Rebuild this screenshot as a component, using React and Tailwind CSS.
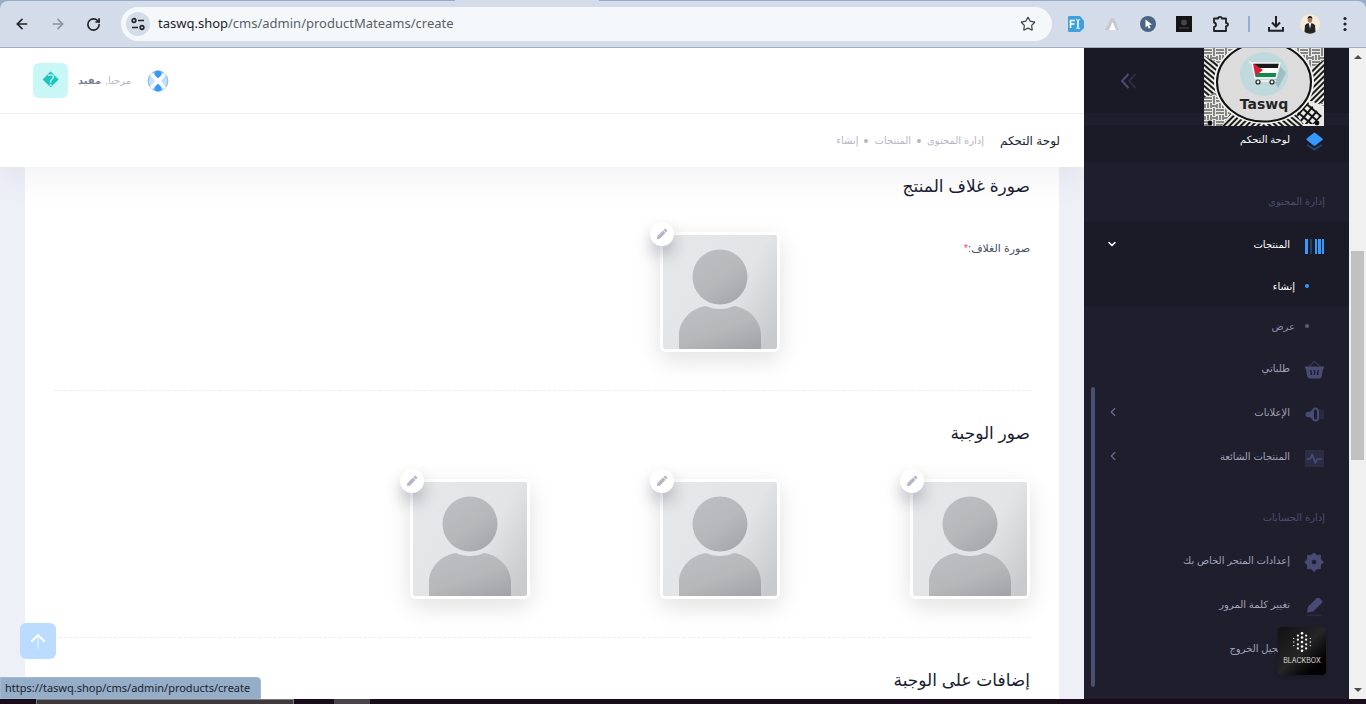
import { ArrowLeft, ArrowRight, RotateCw, Star, ChevronDown, ChevronLeft } from "lucide-react";

const crumbs = ["إدارة المحتوى", "المنتجات", "إنشاء"];

const AvatarArt = () => (
    <svg viewBox="0 0 114 114" className="block size-full rounded-xs" aria-hidden="true">
        <defs>
            <linearGradient id="photoBg" x1="0" y1="0.2" x2="1" y2="0.8">
                <stop offset="0" stopColor="#e5e7e8" />
                <stop offset="0.6" stopColor="#e2e4e5" />
                <stop offset="1" stopColor="#c8cacb" />
            </linearGradient>
            <linearGradient id="photoFg" x1="0.2" y1="0" x2="0.9" y2="1">
                <stop offset="0" stopColor="#bbbdc0" />
                <stop offset="0.5" stopColor="#b6b8ba" />
                <stop offset="1" stopColor="#a2a4a7" />
            </linearGradient>
        </defs>
        <rect width="114" height="114" fill="url(#photoBg)" />
        <circle cx="57" cy="42" r="27.5" fill="url(#photoFg)" />
        <path d="M16 114V100C16 86 28 73 43 71C51 75 63 75 71 71C86 73 98 86 98 100V114Z" fill="url(#photoFg)" />
    </svg>
);

const Photo = ({ label }) => (
    <div className="relative size-30 rounded-md border-3 border-white bg-white shadow-[0_8px_24px_rgba(0,0,0,0.12)]">
        <AvatarArt />
        <button
            type="button"
            aria-label={label}
            className="absolute -top-[13px] -left-[13px] flex size-6 items-center justify-center rounded-full bg-white shadow-[0_9px_16px_rgba(24,28,50,0.25)]"
        >
            <svg viewBox="0 0 12 12" className="size-3" fill="#b5b5c3" aria-hidden="true">
                <path d="M1 11L1.3 8.2L7 2.6L9.4 5L3.8 10.7Z M7.5 2.1L8.6 1Q9.2 0.5 9.9 1.1L10.9 2.1Q11.5 2.8 11 3.4L9.9 4.5Z" />
            </svg>
        </button>
    </div>
);

const iconBox = "size-6 shrink-0";

const LayersIcon = () => (
    <svg viewBox="0 0 24 24" className={iconBox} aria-hidden="true">
        <path d="M5.5 16.2L13.5 21.7L21.5 16.2L20.3 15.2L13.5 19.4L6.7 15.2Z" fill="#3699ff" opacity="0.35" />
        <path d="M12.6 3.9Q13.5 3.2 14.4 3.9L21.3 9.4Q22.2 10.2 21.3 11L14.4 16.4Q13.5 17.1 12.6 16.4L5.7 11Q4.8 10.2 5.7 9.4Z" fill="#3699ff" />
    </svg>
);

const BarcodeIcon = () => (
    <svg viewBox="0 0 24 24" className={iconBox} fill="#3699ff" aria-hidden="true">
        <path d="M4 5H7V20H4ZM14 5H16V20H14ZM17 5H20V20H17ZM21 5H23V20H21Z" />
        <path d="M9 5H11V20H9Z" opacity="0.3" />
    </svg>
);

const BasketIcon = () => (
    <svg viewBox="0 0 24 24" className={iconBox} aria-hidden="true">
        <path d="M7.5 9L13.5 3.5L19.5 9" fill="none" stroke="#494b74" strokeWidth="1.5" opacity="0.5" />
        <path fillRule="evenodd" d="M4.5 8.5H22.5Q23.3 8.5 23.1 9.7Q22.7 11 22 11.2L20.8 18Q20.4 20.5 18 20.5H9Q6.6 20.5 6.2 18L5 11.2Q4.3 11 4 9.7Q3.8 8.5 4.5 8.5ZM9 12L9.7 17H11.2L10.5 12ZM12.8 12V17H14.2V12ZM16.5 12L15.8 17H17.3L18 12Z" fill="#494b74" />
    </svg>
);

const SpeakerIcon = () => (
    <svg viewBox="0 0 24 24" className={iconBox} aria-hidden="true">
        <path d="M17 8H22Q23 8 23 9V16Q23 17 22 17H17Z" fill="#494b74" opacity="0.3" />
        <rect x="12" y="6.5" width="5" height="12" rx="2.5" fill="none" stroke="#494b74" strokeWidth="2" />
        <path d="M11 8V17L8.3 15H6Q4.5 14.8 4.5 12.5Q4.5 10.2 6 10H8.3Z" fill="#494b74" />
    </svg>
);

const PulseIcon = () => (
    <svg viewBox="0 0 24 24" className={iconBox} aria-hidden="true">
        <rect x="4" y="4" width="19" height="17" rx="1" fill="#494b74" opacity="0.35" />
        <path d="M6 13H9L11.3 8.5L14.3 17L16.3 13H20.5" fill="none" stroke="#494b74" strokeWidth="1.7" strokeLinejoin="round" strokeLinecap="round" />
    </svg>
);

const GearIcon = () => (
    <svg viewBox="0 0 24 24" className={iconBox} aria-hidden="true">
        <path
            fillRule="evenodd"
            d="M13 3L15.8 5.3H19.4V8.9L22.3 12L19.4 15.1V18.7H15.8L13 21.5L10.2 18.7H6.6V15.1L3.8 12L6.6 8.9V5.3H10.2ZM13 9.2A2.8 2.8 0 1 0 13 14.8A2.8 2.8 0 1 0 13 9.2Z"
            fill="#494b74"
            stroke="#494b74"
            strokeLinejoin="round"
        />
    </svg>
);

const EraserIcon = () => (
    <svg viewBox="0 0 24 24" className={iconBox} aria-hidden="true">
        <path d="M6 18.5L7 12.8L15.5 4.3Q17 3 18.5 4.3L20.9 6.5Q22 7.8 20.9 9L12.3 17.4Z" fill="#494b74" />
        <rect x="6" y="20.5" width="15" height="1.8" rx="0.9" fill="#494b74" opacity="0.3" />
    </svg>
);

const menu = [
    { title: "إدارة المحتوى" },
    {
        label: "المنتجات",
        icon: BarcodeIcon,
        open: true,
        children: [
            { label: "إنشاء", active: true },
            { label: "عرض" },
        ],
    },
    { label: "طلباتي", icon: BasketIcon },
    { label: "الإعلانات", icon: SpeakerIcon, more: true },
    { label: "المنتجات الشائعة", icon: PulseIcon, more: true },
    { title: "إدارة الحسابات" },
    { label: "إعدادات المتجر الخاص بك", icon: GearIcon },
    { label: "تغيير كلمة المرور", icon: EraserIcon },
    { label: "تسجيل الخروج" },
];

const BrandLogo = () => (
    <svg viewBox="0 0 120 78" className="block w-30" aria-hidden="true">
        <defs>
            <pattern id="weave" width="12" height="12" patternUnits="userSpaceOnUse">
                <path d="M0 2H8M0 5H8M10 0V8M7 7V12M4 7V12M1 8V12M8 10H12" stroke="#222" strokeWidth="1" />
            </pattern>
            <pattern id="hatch" width="4" height="4" patternUnits="userSpaceOnUse" patternTransform="rotate(40)">
                <path d="M0 1H4" stroke="#1a1a1a" strokeWidth="2" />
            </pattern>
            <pattern id="hatchBack" width="4" height="4" patternUnits="userSpaceOnUse" patternTransform="rotate(-45)">
                <path d="M0 1H4" stroke="#1a1a1a" strokeWidth="2" />
            </pattern>
            <pattern id="mesh" width="6" height="6" patternUnits="userSpaceOnUse" patternTransform="rotate(40)">
                <path d="M0 0H6M0 0V6" stroke="#111" strokeWidth="4" />
            </pattern>
        </defs>
        <rect width="120" height="78" fill="#e9eae5" />
        <rect width="120" height="78" fill="url(#weave)" />
        <path d="M0 8L20 18L12 44L0 50Z" fill="#e9eae5" />
        <path d="M0 8L20 18L12 44L0 50Z" fill="url(#hatch)" />
        <path d="M104 22L120 12V54L104 60Z" fill="#e9eae5" />
        <path d="M104 22L120 12V54L104 60Z" fill="url(#hatchBack)" />
        <path d="M84 78L104 52L120 58V78Z" fill="#e9eae5" />
        <path d="M90 68L104 54L118 68L110 76H96Z" fill="url(#mesh)" />
        <path d="M18 78L30 60H60V78Z" fill="#e9eae5" />
        <path d="M18 78L30 60H60V78Z" fill="url(#hatchBack)" />
        <path d="M60 60H88L100 78H60Z" fill="#e9eae5" />
        <path d="M60 60H88L100 78H60Z" fill="url(#hatch)" />
        <ellipse cx="60" cy="34" rx="50" ry="42" fill="#f4f4f2" />
        <ellipse cx="60" cy="34" rx="47" ry="39.5" fill="#dcdcdd" stroke="#111" strokeWidth="2" />
        <circle cx="6" cy="75" r="2.4" fill="#111" />
        <circle cx="113" cy="75" r="2.4" fill="#111" />
        <ellipse cx="60" cy="26" rx="24" ry="22" fill="#c0d9dc" />
        <path d="M70 32L76 18L82 25L74 40Z" fill="#8fb2bb" opacity="0.7" />
        <path d="M50 15H75L74 20H50Z" fill="#191919" />
        <path d="M50 20H74L73 25H50Z" fill="#fff" />
        <path d="M50 25H73L72 29H51Z" fill="#138a4b" />
        <path d="M49 15L59 22L50 29Z" fill="#d8203c" />
        <path d="M45 14L48 15L51 30H72L76 15H49" fill="none" stroke="#f5f5f5" strokeWidth="1.5" />
        <path d="M52 33H72" stroke="#f5f5f5" strokeWidth="1.5" />
        <circle cx="54" cy="34" r="2" fill="#eee" stroke="#222" strokeWidth="1.2" />
        <circle cx="68" cy="34" r="2" fill="#eee" stroke="#222" strokeWidth="1.2" />
        <text x="60" y="61" textAnchor="middle" fontSize="14" fontWeight="700" fontFamily="DejaVu Sans, sans-serif" fill="#242424">
            Taswq
        </text>
    </svg>
);

const BrowserBar = () => (
    <div dir="ltr" className="bg-[#94acc7]">
        <div className="flex h-px">
            <div className="w-1/3" />
            <div className="w-36 bg-[#d3dce8]" />
        </div>
        <div className="flex h-[47px] items-center rounded-t-lg border-b border-[#9fb0c4] bg-[#d3dce8] pr-3 pl-3.5 text-[#1f2127]">
            <button type="button" aria-label="Back" className="mr-5"><ArrowLeft size={16} strokeWidth={2.4} /></button>
            <button type="button" aria-label="Forward" className="mr-5 text-[#8b939f]"><ArrowRight size={16} strokeWidth={2.4} /></button>
            <button type="button" aria-label="Reload" className="mr-5"><RotateCw size={15} strokeWidth={2.6} /></button>
            <div className="mr-4 flex h-[34px] flex-1 items-center rounded-full bg-[#f4f8fb] pr-4 pl-[5px]">
                <button type="button" aria-label="Site information" className="mr-2 flex size-6 items-center justify-center rounded-full bg-[#d3dce8]">
                    <svg viewBox="0 0 14 14" className="size-3.5" fill="none" stroke="#23252b" strokeWidth="1.7" aria-hidden="true">
                        <circle cx="3" cy="3.5" r="1.8" />
                        <path d="M7 3.5H13M1 10.5H7" />
                        <circle cx="11" cy="10.5" r="1.8" />
                    </svg>
                </button>
                <div className="relative flex-1 font-['Noto_Sans'] text-[13px] text-[#5a5f66]">
                    <label htmlFor="address">
                        <span className="text-[#1f2127]">taswq.shop</span>/cms/admin/productMateams/create
                    </label>
                    <input id="address" className="absolute inset-0 w-full bg-transparent outline-none" />
                </div>
                <button type="button" aria-label="Bookmark"><Star size={16} strokeWidth={1.8} color="#43474e" /></button>
            </div>
            <div className="flex items-center gap-5">
                <svg viewBox="0 0 16 16" className="size-4" aria-hidden="true">
                    <path d="M1 0H12L16 5V12L12 16H1Q0 16 0 15V1Q0 0 1 0Z" fill="#3ea0dc" />
                    <path d="M2.5 12V4.5H7M2.5 8H6.5" stroke="#fff" strokeWidth="1.6" fill="none" />
                    <path d="M8 3.5Q10 3.5 10 5V11Q10 12.7 8 12.7M12 3.5Q10 3.5 10 5V11Q10 12.7 12 12.7" stroke="#fff" fill="none" />
                </svg>
                <svg viewBox="0 0 16 16" className="size-4" aria-hidden="true">
                    <path d="M1 14L7 2H10L15 14Z" fill="#c5cad0" />
                    <path d="M5 14L8.5 6L12 14Z" fill="#fff" />
                </svg>
                <svg viewBox="0 0 16 16" className="size-4" aria-hidden="true">
                    <circle cx="8" cy="8" r="8" fill="#4c6484" />
                    <path d="M5.5 3.5L12 8.5L9.2 9L10.5 12L8.8 12.6L7.5 9.8L5.5 11.5Z" fill="#fff" />
                </svg>
                <svg viewBox="0 0 16 16" className="size-4" aria-hidden="true">
                    <rect width="16" height="16" fill="#141414" />
                    <circle cx="8" cy="6.5" r="3" fill="#444" />
                    <path d="M3 12H13" stroke="#444" />
                </svg>
                <svg viewBox="0 0 18 18" className="size-[18px]" fill="none" stroke="#1f2127" strokeWidth="1.8" aria-hidden="true">
                    <path d="M2 3.5H6.2Q6.2 1.8 8 1.8T9.8 3.5H14V7.9Q16 8 16 9.5T14 11.1V16H2V12Q4 11.6 4 9.7T2 7.5Z" strokeLinejoin="round" />
                </svg>
                <span className="-mx-0.5 h-4 w-0.5 bg-[#8fb0d4]" />
                <svg viewBox="0 0 16 16" className="size-4" fill="none" stroke="#1f2127" strokeWidth="2" aria-hidden="true">
                    <path d="M8 0V10M4 6.5L8 10.5L12 6.5M1 11V14.8H15V11" />
                </svg>
                <svg viewBox="0 0 20 20" className="-mx-1 size-5" aria-hidden="true">
                    <circle cx="10" cy="10" r="10" fill="#f3ead8" />
                    <path d="M4.5 18L5 11.5Q6 9 10 9T15 11.5L15.5 18Q10 21.5 4.5 18Z" fill="#262123" />
                    <path d="M8.8 9H11.2L10 15Z" fill="#fff" />
                    <ellipse cx="10" cy="5.8" rx="2.2" ry="3" fill="#a5795c" />
                    <path d="M7.6 5Q7.6 2 10 2T12.4 5L11.5 4H8.5Z" fill="#2a1f1a" />
                </svg>
                <svg viewBox="0 0 18 18" className="size-[18px]" fill="#1f2127" aria-hidden="true">
                    <circle cx="9" cy="3.5" r="1.6" />
                    <circle cx="9" cy="9" r="1.6" />
                    <circle cx="9" cy="14.5" r="1.6" />
                </svg>
            </div>
        </div>
    </div>
);

const MenuEntry = ({ item }) => {
    if (item.title) {
        return <h4 className="h-15 px-6 pt-[30px] text-[10px] leading-5 text-[#4c4e6f]">{item.title}</h4>;
    }
    const Icon = item.icon;
    return (
        <div>
            <a href="#" className={`flex h-11 items-center pr-6 pl-[22px] text-[10px] ${item.open ? "bg-[#1b1b28] text-white" : "text-[#a2a3b7]"}`}>
                <span className="ml-[11px] flex w-6 justify-center pt-[3px]">{Icon && <Icon />}</span>
                <span className="flex-1">{item.label}</span>
                {item.open && <ChevronDown size={12} strokeWidth={3} />}
                {item.more && <ChevronLeft size={14} strokeWidth={2} color="#6c6e8d" />}
            </a>
            {item.children?.map((child) => (
                <a
                    key={child.label}
                    href="#"
                    className={`flex h-10 items-center gap-2.5 pr-10 text-[10px] ${child.active ? "bg-[#1b1b28] text-white" : "text-[#8f90a8]"}`}
                >
                    <span className={`size-1 rounded-full ${child.active ? "bg-[#3699ff]" : "bg-[#5c5e81]"}`} />
                    {child.label}
                </a>
            ))}
        </div>
    );
};

// column heights of the dotted mark, outer to inner
const dotColumns = [
    { x: 3, ys: [8, 12, 16], r: 0.7 },
    { x: 7.5, ys: [5, 9.5, 14.5, 19], r: 1.2 },
    { x: 12, ys: [2.5, 7, 12, 17, 21.5], r: 1.4 },
    { x: 16.5, ys: [5, 9.5, 14.5, 19], r: 1.2 },
    { x: 21, ys: [8, 12, 16], r: 0.7 },
];

const Sidebar = () => (
    <aside className="relative w-[265px] shrink-0 overflow-hidden bg-[#1e1e2d]">
        <div className="flex h-[65px] items-center justify-end bg-[#1a1a27] pl-9">
            <button type="button" aria-label="طي القائمة">
                <svg viewBox="0 0 18 18" className="size-[18px]" fill="none" strokeWidth="2" aria-hidden="true">
                    <path d="M8.5 2L2 9L8.5 16" stroke="#494b74" />
                    <path d="M15.5 2L9 9L15.5 16" stroke="#494b74" opacity="0.4" />
                </svg>
            </button>
        </div>
        <a href="#" aria-label="Taswq" className="absolute top-0 right-[25px]">
            <BrandLogo />
        </a>
        <nav className="pt-3">
            <a href="#" className="flex h-[37px] items-center gap-[11px] bg-[#1b1b28] px-6 pb-2 text-[10px] text-white">
                <span className="pt-[3px]"><LayersIcon /></span>
                <span>لوحة التحكم</span>
            </a>
            {menu.map((item) => (
                <MenuEntry key={item.title ?? item.label} item={item} />
            ))}
        </nav>
        <div className="absolute bottom-3 left-[7px] h-75 w-1 rounded-full bg-[#484f74]" />
        <div className="absolute right-[23px] bottom-6 flex size-12 flex-col items-center justify-end rounded-sm bg-linear-to-br from-[#111] via-[#262626] to-black pb-2.5 shadow-md" dir="ltr">
            <svg viewBox="0 0 24 24" className="mb-1 size-[22px]" fill="#fff" aria-hidden="true">
                {dotColumns.map(({ x, ys, r }) =>
                    ys.map((y) => <circle key={`${x}-${y}`} cx={x} cy={y} r={r} />)
                )}
            </svg>
            <span className="font-['Inter'] text-[7px] leading-2 text-[#ddd]">BLACKBOX</span>
        </div>
    </aside>
);

const TopHeader = () => (
    <header className="relative z-10 bg-white shadow-[0_10px_30px_rgba(82,63,105,0.08)]">
        <div className="flex h-[66px] items-center justify-end border-b border-[#ebedf3] pl-[33px]">
            <button type="button" aria-label="اللغة" className="ml-4">
                <svg viewBox="0 0 22 22" className="size-[22px]" aria-hidden="true">
                    <circle cx="11" cy="11" r="9.8" fill="#c3dffd" stroke="#8abdf5" strokeWidth="1.2" />
                    <path d="M5 3L11 8L17 3L19 5L14 11L19 17L17 19L11 14L5 19L3 17L8 11L3 5Z" fill="#fff" />
                    <path d="M8 1.5Q11 -0.3 14 1.5Q16 4.8 11 8.2Q6 4.8 8 1.5ZM8 20.5Q11 22.3 14 20.5Q16 17.2 11 13.8Q6 17.2 8 20.5Z" fill="#3699ff" />
                </svg>
            </button>
            <p className="ml-2.5 flex gap-1 text-[10px] text-[#b5b5c3]">
                <span>مرحبا,</span>
                <span className="font-bold text-[#7e8299]">مفيد</span>
            </p>
            <span className="flex size-[35px] items-center justify-center rounded-md bg-[#c9f7f5] text-base text-[#1bc5bd]">�</span>
        </div>
        <div className="flex h-[53px] items-center gap-4 pr-6">
            <h1 className="text-[12px] text-[#181c32]">لوحة التحكم</h1>
            <ol className="flex items-center gap-1.5 text-[10px] text-[#b5b5c3]">
                {crumbs.map((crumb, i) => (
                    <li key={crumb} className="flex items-center gap-1.5">
                        {i > 0 && <span className="size-1 rounded-full bg-[#b5b5c3]" />}
                        <a href="#">{crumb}</a>
                    </li>
                ))}
            </ol>
        </div>
    </header>
);

const sectionTitle = "mb-[30px] text-[17px] leading-[30px] text-[#181c32]";

const Content = () => (
    <main className="min-h-0 flex-1 overflow-hidden bg-[#eef0f8] px-[25px]">
        <div className="h-full bg-white px-[29px] pt-[5px]">
            <section className="border-b border-dashed border-[#ebedf3] pb-[38px]">
                <h3 className={sectionTitle}>صورة غلاف المنتج</h3>
                <div className="grid grid-cols-4 gap-6">
                    <p className="pt-2 text-[11px] leading-4 text-[#464e5f]">
                        صورة الغلاف:<span className="text-[#f64e60]">*</span>
                    </p>
                    <Photo label="تغيير صورة الغلاف" />
                </div>
            </section>
            <section className="border-b border-dashed border-[#ebedf3] pt-7 pb-[38px]">
                <h3 className={sectionTitle}>صور الوجبة</h3>
                <div className="grid grid-cols-4 gap-6">
                    {[1, 2, 3].map((n) => (
                        <Photo key={n} label={`تغيير الصورة ${n}`} />
                    ))}
                </div>
            </section>
            <section className="pt-7">
                <h3 className={sectionTitle}>إضافات على الوجبة</h3>
            </section>
        </div>
    </main>
);

const PageScrollbar = () => (
    <div className="flex w-[17px] shrink-0 flex-col items-center justify-between bg-[#f0f0f0] py-1.5" aria-hidden="true">
        <svg viewBox="0 0 8 4" className="h-1.5 w-2"><path d="M0 4L4 0L8 4Z" fill="#4b4b4b" /></svg>
        <div className="flex w-[13px] flex-1 flex-col">
            <div className="flex-[191]" />
            <div className="flex-[209] bg-[#c1c1c1]" />
            <div className="flex-[227]" />
        </div>
        <svg viewBox="0 0 8 4" className="h-1.5 w-2"><path d="M0 0L4 4L8 0Z" fill="#4b4b4b" /></svg>
    </div>
);

const App = () => (
    <div dir="rtl" className="flex h-screen flex-col overflow-hidden font-['Liberation_Sans','DejaVu_Sans',sans-serif]">
        <BrowserBar />
        <div className="relative flex min-h-0 flex-1">
            <PageScrollbar />
            <Sidebar />
            <div className="flex min-w-0 flex-1 flex-col overflow-hidden">
                <TopHeader />
                <Content />
            </div>
            <a
                href="#"
                aria-label="إلى الأعلى"
                className="absolute bottom-10 left-5 z-20 flex size-9 items-center justify-center rounded-md bg-[#bbdcff]"
            >
                <svg viewBox="0 0 16 16" className="size-4" fill="none" stroke="#fff" strokeWidth="2" strokeLinecap="round" aria-hidden="true">
                    <path d="M2 8L8 2L14 8" />
                    <path d="M8 3V15" opacity="0.5" strokeWidth="1.5" />
                </svg>
            </a>
            <div dir="ltr" className="absolute bottom-0 left-0 z-20 h-[22px] rounded-tr-sm border border-[#a3b6ca] bg-[#94aec9] pr-2.5 pl-1 font-['Noto_Sans'] text-[11px] leading-5 text-[#1f2127]">
                https://taswq.shop/cms/admin/products/create
            </div>
        </div>
        <div dir="ltr" className="flex h-[5px] shrink-0 bg-[#190d1b] pl-9">
            <div className="mr-10 w-[258px] border border-b-0 border-[#7b7b7b] bg-[#3e3a3d]" />
            <div className="w-9 bg-[#4b444c]" />
        </div>
    </div>
);

export default App;
